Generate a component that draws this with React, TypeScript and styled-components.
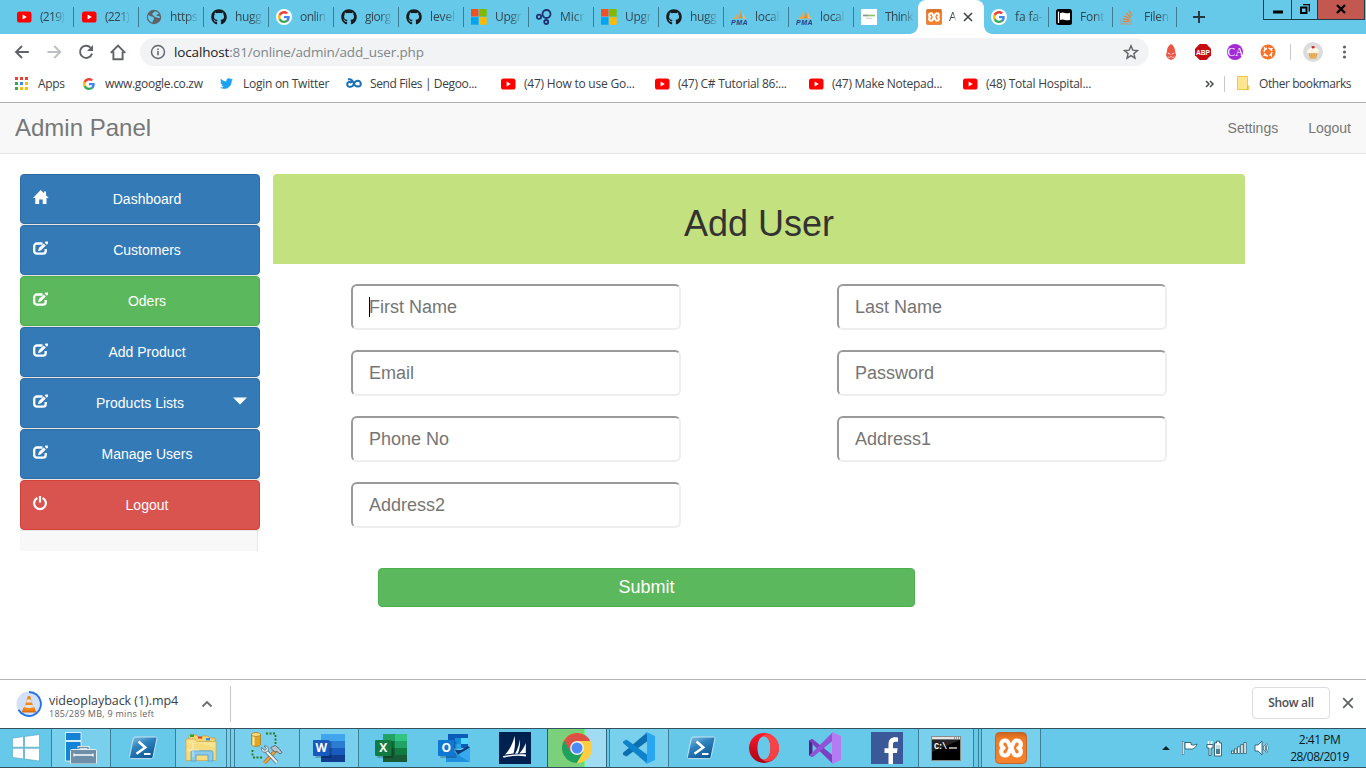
import React from 'react';
import styled, { createGlobalStyle } from 'styled-components';
import { FaGithub, FaTwitter } from 'react-icons/fa';

const SKY = '#66c9ea';
const UI = `'Open Sans', 'Noto Sans', sans-serif`;
const PAGE = `'Liberation Sans', Arial, sans-serif`;

const Global = createGlobalStyle`
  * { box-sizing: border-box; }
  html, body { margin: 0; background: #fff; overflow: hidden; }
  svg { display: block; flex: none; }
`;

const Screen = styled.div`
  width: 1366px;
  height: 768px;
  display: flex;
  flex-direction: column;
  overflow: hidden;
  background: #fff;
  font-family: ${UI};
`;

/* ---------- tab strip ---------- */
const TabStrip = styled.div`
  height: 34px;
  flex: none;
  display: flex;
  padding-left: 9px;
  background: ${SKY};
`;
const TabBox = styled.div<{ $w: number; $line: boolean }>`
  width: ${p => p.$w}px;
  height: 34px;
  flex: none;
  display: flex;
  align-items: center;
  padding-left: 7px;
  gap: 8px;
  background: linear-gradient(#3d7c92, #3d7c92) right 0 top 7px / ${p => (p.$line ? '1px' : '0')} 20px no-repeat;
`;
const TabText = styled.span<{ $ls?: number }>`
  font-size: 12px;
  line-height: 18px;
  color: #33474f;
  white-space: nowrap;
  letter-spacing: ${p => p.$ls ?? -0.4}px;
  mask-image: linear-gradient(to right, #000 60%, rgba(0, 0, 0, 0.15) 100%);
`;
const ActiveTab = styled.div`
  width: 66px;
  height: 34px;
  margin-left: -1px;
  flex: none;
  display: flex;
  align-items: center;
  padding-left: 8px;
  gap: 7px;
  background: #fff;
  border-radius: 8px 8px 0 0;
  position: relative;
  &::before, &::after {
    content: '';
    position: absolute;
    bottom: 0;
    width: 8px;
    height: 8px;
  }
  &::before { left: -8px; background: radial-gradient(circle at 0 0, transparent 7.5px, #fff 8px); }
  &::after { right: -8px; background: radial-gradient(circle at 100% 0, transparent 7.5px, #fff 8px); }
`;
const IconSlot = styled.span`
  width: 16px;
  height: 16px;
  flex: none;
  display: flex;
  align-items: center;
  justify-content: center;
`;
const PlusSlot = styled.div`
  width: 86px;
  display: flex;
  align-items: center;
  padding-left: 15px;
`;
const WindowButtons = styled.div`
  display: flex;
  height: 20px;
  border: 1px solid #1d3c47;
  border-top: 0;
`;
const WinButton = styled.div<{ $w: number; $first?: boolean; $close?: boolean }>`
  width: ${p => p.$w}px;
  background: ${p => (p.$close ? '#c25850' : SKY)};
  border-left: ${p => (p.$first ? 'none' : '1px solid #1d3c47')};
  display: flex;
  align-items: center;
  justify-content: center;
  padding-bottom: 1px;
`;

/* ---------- toolbar ---------- */
const Toolbar = styled.div`
  height: 36px;
  flex: none;
  display: flex;
  align-items: center;
`;
const NavIcons = styled.div`
  width: 140px;
  padding-left: 12px;
  display: flex;
  gap: 12px;
`;
const Omnibox = styled.div`
  width: 1009px;
  height: 28px;
  border-radius: 14px;
  background: #f1f3f4;
  display: flex;
  align-items: center;
  padding: 0 10px;
  gap: 8px;
`;
const Url = styled.span`
  flex: 1;
  font-size: 13.5px;
  line-height: 20px;
  letter-spacing: -0.15px;
  color: #80868b;
  b { font-weight: 400; color: #202124; }
`;
const Extensions = styled.div`
  display: flex;
  align-items: center;
  gap: 16px;
  padding-left: 14px;
`;
const Divider = styled.span<{ $h: number }>`
  width: 1px;
  height: ${p => p.$h}px;
  flex: none;
  background: #c6c9cc;
`;
const ExtEnd = styled.div`
  display: flex;
  align-items: center;
  gap: 12px;
  margin-left: -2px;
`;

/* ---------- bookmarks ---------- */
const BookmarkBar = styled.div`
  height: 33px;
  flex: none;
  display: flex;
  align-items: center;
  padding: 0 0 5px 15px;
  border-bottom: 1px solid #b1b1b1;
`;
const BookmarkItem = styled.div<{ $w: number; $gap: number }>`
  width: ${p => p.$w}px;
  flex: none;
  display: flex;
  align-items: center;
  gap: ${p => p.$gap}px;
`;
const BookmarkText = styled.span<{ $ls: number }>`
  font-size: 12px;
  line-height: 18px;
  color: #3c4043;
  white-space: nowrap;
  letter-spacing: ${p => p.$ls}px;
`;

/* ---------- web page ---------- */
const Page = styled.div`
  height: 576px;
  flex: none;
  font-family: ${PAGE};
`;
const Navbar = styled.div`
  height: 51px;
  display: flex;
  align-items: center;
  padding: 0 15px;
  background: #f8f8f8;
  border-bottom: 1px solid #e7e7e7;
  color: #777;
`;
const Brand = styled.div`
  flex: 1;
  font-size: 24px;
  line-height: 28px;
`;
const NavLink = styled.a`
  margin-left: 30px;
  font-size: 14px;
`;
const Columns = styled.div`
  display: flex;
  align-items: flex-start;
  gap: 15px;
  padding: 20px 0 0 20px;
`;
const Sidebar = styled.div`
  width: 238px;
  height: 377px;
  background: #f8f8f8;
  border-right: 1px solid #e7e7e7;
`;
const tones = {
  blue: ['#337ab7', '#2e6da4'],
  green: ['#5cb85c', '#4cae4c'],
  red: ['#d9534f', '#d43f3a'],
};
const MenuItem = styled.div`
  width: 240px;
  height: 51px;
  border-bottom: 1px solid #e7e7e7;
`;
const MenuButton = styled.div<{ $tone: keyof typeof tones }>`
  width: 240px;
  height: 50px;
  border-radius: 4px;
  border: 1px solid ${p => tones[p.$tone][1]};
  background: ${p => tones[p.$tone][0]};
  color: #fff;
  display: flex;
  align-items: center;
  padding: 0 12px;
  font-size: 14px;
`;
const GlyphSlot = styled.span`
  width: 14px;
  flex: none;
  margin-bottom: 4px;
  svg { overflow: visible; }
`;
const MenuLabel = styled.span`
  flex: 1;
  text-align: center;
`;
const Main = styled.div`
  width: 972px;
`;
const Banner = styled.div`
  height: 90px;
  padding-top: 30px;
  border-radius: 4px 4px 0 0;
  background: #c4e17f;
  text-align: center;
`;
const Title = styled.h1`
  margin: 0;
  font-size: 36px;
  font-weight: 500;
  line-height: 40px;
  color: #333;
`;
const Fields = styled.div`
  display: grid;
  grid-template-columns: 330px 330px;
  column-gap: 156px;
  row-gap: 20px;
  padding: 20px 0 0 78px;
`;
const Field = styled.div`
  position: relative;
  height: 46px;
`;
const Input = styled.input`
  width: 330px;
  height: 46px;
  padding: 8px 16px;
  display: block;
  font-family: ${PAGE};
  font-size: 18px;
  background: #fff;
  border: 2px solid;
  border-color: #9a9a9a #eee #eee #9a9a9a;
  border-radius: 6px;
  outline: none;
  &::placeholder { color: #757575; opacity: 1; }
`;
const Caret = styled.span`
  position: absolute;
  left: 18px;
  top: 13px;
  width: 1px;
  height: 20px;
  background: #000;
`;
const Submit = styled.button`
  display: block;
  width: 537px;
  height: 39px;
  margin: 40px 0 0 105px;
  padding: 0;
  border: 1px solid #4cae4c;
  border-radius: 4px;
  background: #5cb85c;
  color: #fff;
  font-family: ${PAGE};
  font-size: 18px;
`;

/* ---------- download shelf ---------- */
const Shelf = styled.div`
  height: 49px;
  flex: none;
  display: flex;
  align-items: center;
  padding-left: 15px;
  border-top: 1px solid #b5b5b5;
`;
const Download = styled.div`
  width: 151px;
  margin-left: 6px;
  padding-top: 3px;
`;
const FileName = styled.div`
  font-size: 12.5px;
  line-height: 16px;
  letter-spacing: -0.05px;
  color: #3c4043;
  white-space: nowrap;
`;
const Progress = styled.div`
  font-size: 9px;
  line-height: 10px;
  letter-spacing: 0.28px;
  color: #5f6368;
  white-space: nowrap;
`;
const ShelfRight = styled.div`
  margin-left: auto;
  display: flex;
  align-items: center;
  gap: 12px;
  padding: 0 12px 2px 0;
`;
const ShowAll = styled.div`
  width: 78px;
  height: 32px;
  border: 1px solid #dadce0;
  border-radius: 4px;
  font-size: 12px;
  font-weight: 600;
  line-height: 30px;
  letter-spacing: -0.3px;
  text-align: center;
  color: #4b4f53;
`;

/* ---------- taskbar ---------- */
const Taskbar = styled.div`
  height: 40px;
  flex: none;
  display: flex;
  background: ${SKY};
  border-top: 1px solid #34525d;
  border-bottom: 1px solid #34525d;
`;
const Cell = styled.div<{ $w: number; $lit?: boolean; $line?: boolean; $left?: boolean }>`
  width: ${p => p.$w}px;
  flex: none;
  display: flex;
  align-items: center;
  justify-content: center;
  background: ${p => (p.$lit ? '#78d0ec' : 'transparent')};
  border-right: ${p => (p.$line ? '1px solid #3d7f96' : 'none')};
  border-left: ${p => (p.$left ? '1px solid #3d7f96' : 'none')};
`;
const ProgressCell = styled.div`
  width: 60px;
  flex: none;
  display: flex;
  align-items: center;
  justify-content: center;
  background: linear-gradient(to right, #7bd17b 36px, #5cff7a 36px, #5cff7a 37px, #a1dcf2 37px);
  border-left: 1px solid #0c7a28;
  border-right: 1px solid #2f6a80;
`;
const Tray = styled.div`
  margin-left: auto;
  display: flex;
  align-items: center;
`;
const TraySlot = styled.div<{ $w: number }>`
  width: ${p => p.$w}px;
  display: flex;
  justify-content: center;
`;
const Clock = styled.div`
  width: 94px;
  padding-left: 1px;
  font-size: 12px;
  line-height: 17px;
  letter-spacing: -0.5px;
  text-align: center;
  color: #0c1a20;
`;

/* ---------- small icons ---------- */
const YouTube = () => (
  <svg width="16" height="16" viewBox="0 0 16 16">
    <rect x="1" y="2.5" width="14.5" height="11" rx="2.6" fill="#f00" />
    <path d="M6.6 5.6v4.8L10.8 8z" fill="#fff" />
  </svg>
);
const Globe = () => (
  <svg width="16" height="16" viewBox="0 0 16 16">
    <circle cx="8" cy="8" r="7.2" fill="#5f6368" />
    <path d="M2 6.200c1.600 0 2.400 1.200 3.600 1.400 2.200.2 2.400 1.200 2.200 2.600-.3 1.200-1.200 1.200-1.200 3.300C4 13 1.500 10.500 2 6.200zM8.500 2.200c1.800 0 3.600 1 4.400 2.300-.4.900-1.500.7-2.200 1.400-.8.700.6 1.300 1.800 1.200 1 0 1.400.6 1.400 1.400-.2.700-2.500.6-3.600-.2-.9-.6-2-.6-2.400-1.400-.3-.9-1.900-.9-1.700-2 .2-1.200 1.300-.8 1.600-1.500.2-.5.200-.9.700-1.200z" fill={SKY} />
  </svg>
);
const GoogleG = ({ size = 12 }: { size?: number }) => (
  <svg width={size} height={size} viewBox="0 0 48 48">
    <path fill="#4285F4" d="M47 24.500c0-1.700-.1-3-.4-4.500H24v9h13c-.6 3.200-2.300 5.900-5 7.700l7.700 6C44.300 38.500 47 32 47 24.500z" />
    <path fill="#34A853" d="M24 48c6.500 0 11.900-2.100 15.900-5.800l-7.800-6c-2.200 1.500-4.900 2.300-8.100 2.300-6.200 0-11.500-4.200-13.400-9.900l-8 6.200C6.600 42.700 14.700 48 24 48z" />
    <path fill="#FBBC05" d="M10.600 28.600c-.5-1.500-.8-3-.8-4.600s.3-3.100.8-4.600l-8-6.200C.9 16.500 0 20.100 0 24s.9 7.500 2.600 10.800z" />
    <path fill="#EA4335" d="M24 9.500c3.500 0 6.700 1.200 9.200 3.600l6.900-6.900C35.900 2.400 30.500 0 24 0 14.700 0 6.600 5.400 2.600 13.200l8 6.200C12.500 13.700 17.800 9.500 24 9.500z" />
  </svg>
);
const GoogleTab = () => (
  <svg width="16" height="16" viewBox="0 0 16 16">
    <circle cx="8" cy="8" r="8" fill="#fff" />
    <g transform="translate(2 2)"><GoogleG size={12} /></g>
  </svg>
);
const Microsoft = () => (
  <svg width="16" height="16" viewBox="0 0 16 16">
    <path fill="#f25022" d="M0 0h7.500v7.500H0z" /><path fill="#7fba00" d="M8.200 0h7.500v7.500H8.200z" />
    <path fill="#00a4ef" d="M0 8.200h7.500v7.500H0z" /><path fill="#ffb900" d="M8.200 8.200h7.500v7.500H8.200z" />
  </svg>
);
const Circles = () => (
  <svg width="16" height="16" viewBox="0 0 16 16" fill="none" stroke="#1d2f6f" strokeWidth="1.800">
    <circle cx="3" cy="7.800" r="2.100" /><circle cx="10.500" cy="5" r="4" />
    <circle cx="10.200" cy="13" r="2" />
  </svg>
);
const Pma = () => (
  <svg width="17" height="16" viewBox="0 0 17 16">
    <path d="M6.500 1.500C6.600 5 5 8 1.500 10.200c3-.5 4.500-.5 5.500-.2z" fill="#f7a23b" />
    <path d="M9.500.5c.2 4-.5 7-2.300 9.300 1.500-.6 3-.6 4.300 0z" fill="#f28e1c" />
    <path d="M12 3c.8 3 2 5.500 4 7-1.500-.3-3-.2-4-.2z" fill="#f9b35a" />
    <text x="0" y="15.600" fontFamily="Liberation Sans, sans-serif" fontSize="7" fontWeight="700" fontStyle="italic" fill="#2c3f86" textLength="16.500">PMA</text>
  </svg>
);
const Think = () => (
  <svg width="16" height="16" viewBox="0 0 16 16">
    <path fill="#fff" d="M0 0h16v16H0z" />
    <path d="M2 6.500h5" stroke="#8b9488" strokeWidth="1.700" /><path d="M7 6.500h7" stroke="#8cc46e" strokeWidth="1.700" />
    <path d="M5 9.300h6" stroke="#c3cbbf" />
  </svg>
);
const XamppMark = ({ size }: { size: number }) => (
  <svg width={size} height={size} viewBox="0 0 32 32">
    <defs>
      <linearGradient id="xg" x1="0" y1="0" x2="0" y2="1">
        <stop offset="0" stopColor="#c9641f" /><stop offset=".2" stopColor="#f07a24" /><stop offset="1" stopColor="#f5822c" />
      </linearGradient>
    </defs>
    <rect x=".5" y=".5" width="31" height="31" rx="4" fill="url(#xg)" stroke="#c4622a" />
    <path d="M16 16C13 13 14.500 8.500 10.300 8.500 5.500 8.500 5 14 8.500 16 5 18 5.500 23.500 10.300 23.500 14.500 23.500 13.500 19 16 16 18.500 13 17.500 8.500 21.700 8.500 26.500 8.500 27 14 23.500 16 27 18 26.500 23.500 21.700 23.500 17.500 23.500 19 19 16 16z" fill="none" stroke="#fff" strokeWidth="4.200" strokeLinejoin="round" />
  </svg>
);
const FlagTab = () => (
  <svg width="16" height="16" viewBox="0 0 16 16">
    <rect width="16" height="16" rx="2.500" fill="#000" />
    <path d="M2.500 2.500V14" stroke="#fff" strokeWidth="1.300" />
    <path d="M4 4c2-.8 3.600-.6 5 0 1.500.6 3 .4 5-.3v7c-2 .7-3.500.9-5 .3-1.400-.6-3-.8-5 0z" fill="#fff" />
  </svg>
);
const Stack = () => (
  <svg width="16" height="16" viewBox="0 0 16 16" fill="none">
    <path d="M1 9.500v5.500h10V9.500" stroke="#a9a5a0" strokeWidth="1.300" />
    <path d="M3 12.500h6.500M3.200 10l6.300.8M4 7.200l6 1.900M6 4.300l5 3.600M9 1.500l3 5" stroke="#e8843a" strokeWidth="1.400" />
  </svg>
);
const Cross = ({ size, color, w }: { size: number; color: string; w: number }) => (
  <svg width={size} height={size} viewBox="0 0 10 10">
    <path d="M1 1l8 8M9 1L1 9" stroke={color} strokeWidth={w} />
  </svg>
);

const Back = ({ color, flip }: { color: string; flip?: boolean }) => (
  <svg width="20" height="20" viewBox="0 0 20 20" fill="none" stroke={color} strokeWidth="1.900">
    <path d={flip ? 'M3.500 10h12M10.300 4l6 6-6 6' : 'M16.800 10H4.500M10 4l-6 6 6 6'} />
  </svg>
);
const Reload = () => (
  <svg width="20" height="20" viewBox="0 0 20 20">
    <path d="M14.600 5.600A6.100 6.100 0 1 0 16 11.600" fill="none" stroke="#5f6368" strokeWidth="1.900" />
    <path d="M17 3v6h-6z" fill="#5f6368" />
  </svg>
);
const HomeOutline = () => (
  <svg width="20" height="20" viewBox="0 0 20 20" fill="none" stroke="#5f6368" strokeWidth="1.900">
    <path d="M2.800 10.900L10 3.500l7.200 7.400M5.400 9.500v7.700h9.200V9.500" />
  </svg>
);
const Info = () => (
  <svg width="16" height="16" viewBox="0 0 16 16">
    <circle cx="8" cy="8" r="6.500" fill="none" stroke="#5f6368" strokeWidth="1.400" />
    <path d="M8 7v4.300M8 4.400V6" stroke="#5f6368" strokeWidth="1.500" />
  </svg>
);
const Star = () => (
  <svg width="16" height="16" viewBox="0 0 16 16">
    <path d="M8 1.800l1.800 4.300 4.700.4-3.600 3.100 1.100 4.600L8 11.700l-4 2.500 1.100-4.600L1.500 6.500l4.700-.4z" fill="none" stroke="#5f6368" strokeWidth="1.400" />
  </svg>
);
const RedMask = () => (
  <svg width="16" height="16" viewBox="0 0 16 16">
    <path d="M8 0c2.500 1.500 4 4 4 7l1 4c-.5 2.500-2.500 4.500-5 5-2.500-.5-4.500-2.500-5-5l1-4c0-3 1.500-5.500 4-7z" fill="#ea5545" />
    <path d="M4.800 9l2.400 1.200M11.200 9l-2.400 1.200M8 12v1.500M5.200 12.500l1.300 1.500M10.800 12.500L9.500 14" stroke="#fff" strokeWidth=".9" />
  </svg>
);
const Abp = () => (
  <svg width="16" height="16" viewBox="0 0 16 16">
    <path d="M4.700 0h6.600L16 4.700v6.600L11.300 16H4.700L0 11.300V4.700z" fill="#c70d12" />
    <text x="1" y="10.900" fontFamily="Liberation Sans, sans-serif" fontSize="8" fontWeight="700" fill="#fff" textLength="14" lengthAdjust="spacingAndGlyphs">ABP</text>
  </svg>
);
const Ca = () => (
  <svg width="17" height="16" viewBox="0 0 17 16">
    <circle cx="8" cy="8" r="8" fill="#a22bd6" />
    <text x=".5" y="12.200" fontFamily="Liberation Serif, serif" fontSize="12.500" fill="#fff" textLength="16" lengthAdjust="spacingAndGlyphs">CA</text>
  </svg>
);
const OrangeBall = () => (
  <svg width="16" height="16" viewBox="0 0 16 16">
    <circle cx="8" cy="8" r="7.500" fill="#f7722a" />
    <circle cx="8" cy="8" r="3.900" fill="none" stroke="#fff" strokeWidth="1.500" strokeDasharray="4.500 1.630" />
    <path d="M4.200 3.200l.9 2.100M12.800 4.200l-2.100.9M3.200 11.800l2.100-.9M11.800 12.800l-.9-2.100" stroke="#fff" strokeWidth="1.200" />
  </svg>
);
const Cupcake = () => (
  <svg width="20" height="20" viewBox="0 0 20 20">
    <circle cx="10" cy="10" r="10" fill="#dcdcdc" />
    <path d="M5.500 10.500h9l-1.300 6H6.800z" fill="#dd9a3c" />
    <path d="M7.500 11.500l.6 5M10 11.500v5M12.500 11.500l-.6 5" stroke="#f5c979" strokeWidth=".9" />
    <path d="M4 9.500c0-2 1.500-2.500 3-3 1-1.500 4-2 5.500-.5 2 .2 3.500 1.500 3.500 3.300 0 1.500-1.300 2-2.500 2H6.300C5 11.300 4 10.800 4 9.500z" fill="#fdf6e4" />
    <path d="M8.500 5c.5-1.300 2.500-1.500 3.200-.2.300.9-.5 1.700-1.600 1.700S8.400 5.900 8.500 5z" fill="#c9262c" />
  </svg>
);
const Dots = () => (
  <svg width="16" height="16" viewBox="0 0 16 16" fill="#5f6368">
    <circle cx="9.500" cy="3" r="1.600" /><circle cx="9.500" cy="8" r="1.600" /><circle cx="9.500" cy="13" r="1.600" />
  </svg>
);
const appColors = ['#ea4335', '#ea4335', '#ea4335', '#34a853', '#4285f4', '#fbbc05', '#34a853', '#fbbc05', '#fbbc05'];
const AppsGrid = () => (
  <svg width="13" height="13" viewBox="0 0 13 13">
    {appColors.map((c, i) => <rect key={i} x={(i % 3) * 5} y={Math.floor(i / 3) * 5} width="3" height="3" fill={c} />)}
  </svg>
);
const Degoo = () => (
  <svg width="16" height="12" viewBox="0 0 16 12" fill="none" strokeWidth="2">
    <path d="M2 1.500c2.500-.6 4.500.5 6 4.500 1.200 3.200 6.700 3.500 6.800 0 .1-4.300-5.500-4-6.800-.3C6.800 9.700 1.200 10 1.200 6.200c0-2.500 3-3 4.500-1.200" stroke="#1a6fb5" />
  </svg>
);
const Folder = () => (
  <svg width="13" height="15" viewBox="0 0 13 15">
    <path d="M.5.500h10v9.500h1.500v3.500H.5z" fill="#ffe590" stroke="#ecc94a" />
    <path d="M10.500 10v3.500" stroke="#e3bb36" />
  </svg>
);

/* ---------- page glyphs ---------- */
const HomeGlyph = () => (
  <svg width="16" height="14" viewBox="0 0 16 14">
    <path d="M7.700 0L11 3.200V1.500h2v3.700l2.700 2.700H13.500V14H9.700V9.500H6.200V14H2.300V7.900H0z" fill="#fff" />
  </svg>
);
const EditGlyph = () => (
  <svg width="15" height="14" viewBox="0 0 15 14">
    <path d="M9.500 2.500H4A2.700 2.700 0 0 0 1.200 5.200v4.800A2.700 2.700 0 0 0 4 12.700h6a2.700 2.700 0 0 0 2.700-2.700V8" fill="none" stroke="#fff" strokeWidth="2.300" />
    <path d="M5 10.300l.9-3.200 4.800-4.700 2.100 2.100L8 9.300zM11.700 1.400L12.500.6h2.400v2.100l-1.200 1z" fill="#fff" />
  </svg>
);
const PowerGlyph = () => (
  <svg width="14" height="14" viewBox="0 0 14 14" fill="none" stroke="#fff">
    <path d="M4.400 1.900a5.900 5.900 0 1 0 5.200 0" strokeWidth="2.200" /><path d="M7 0v6.500" strokeWidth="2.200" />
  </svg>
);
const CaretGlyph = () => (
  <svg width="14" height="8" viewBox="0 0 14 8"><path d="M0 .5h14L7 7.500z" fill="#fff" /></svg>
);

/* ---------- taskbar icons ---------- */
const Windows = () => (
  <svg width="28" height="28" viewBox="0 0 28 28">
    <path d="M.5 4.200L11.500 2.600v10.600H.5zM12.500 2.500L27.500.500v12.700h-15zM.5 14.300h11v10.600L.5 23.400zM12.500 14.300h15V27l-15-2z" fill="#fff" stroke="#4da3bd" strokeWidth=".6" />
  </svg>
);
const ServerManager = () => (
  <svg width="32" height="32" viewBox="0 0 32 32">
    <path d="M.5.500H16v8H.5zM.5 9.500H16V29H.5z" fill="#1583d3" stroke="#fff" strokeWidth=".8" />
    <path d="M14 16.500v-1h9v1" fill="none" stroke="#fff" strokeWidth="3" />
    <path d="M14 18v-2.500h9V18" fill="none" stroke="#6e8fa8" strokeWidth="1.400" />
    <rect x="5.500" y="17.500" width="26" height="14.500" rx="1" fill="#6e8fa8" stroke="#fff" strokeWidth=".8" />
    <path d="M9 23h19M9 21.500v3M28 21.500v3" stroke="#fff" strokeWidth="1.300" />
  </svg>
);
const PowerShell = () => (
  <svg width="29" height="24" viewBox="0 0 29 24">
    <defs>
      <linearGradient id="ps" x1="0" y1="0" x2=".6" y2="1">
        <stop offset="0" stopColor="#8ec6e8" /><stop offset=".45" stopColor="#2d83bd" /><stop offset="1" stopColor="#0f5a98" />
      </linearGradient>
    </defs>
    <path d="M6.500 1h20c1 0 1.600.7 1.400 1.600l-3.800 18c-.3 1.400-1.100 2-2.300 2h-20c-1 0-1.500-.8-1.300-1.700L4.200 2.800C4.500 1.600 5.300 1 6.500 1z" fill="url(#ps)" stroke="#cfe8f5" strokeWidth=".9" />
    <path d="M9.500 5.500l6.800 6-8.800 6.300" fill="none" stroke="#fff" strokeWidth="2.500" /><path d="M15 18h6.500" stroke="#fff" strokeWidth="2" />
  </svg>
);
const Explorer = () => (
  <svg width="34" height="30" viewBox="0 0 34 30">
    <path d="M5 2h8l2 3h3V3h6l2 2h5v8H5z" fill="#f3d470" stroke="#c79a3b" strokeWidth=".7" />
    <path d="M6 1.500h4v2.500H6z" fill="#2fa836" /><path d="M14 3.500h4v2h-4z" fill="#d9402f" /><path d="M22 5h4v2.500h-4z" fill="#2d8fe0" />
    <path d="M2 6h9l2 2.500h19v19H2z" fill="#f8e390" stroke="#d0a84c" strokeWidth=".8" />
    <path d="M3 12c10-3 20-1 28 3v12H3z" fill="#f3d878" opacity=".7" />
    <path d="M7 28V19.500c0-1 .8-1.700 1.700-1.700h18.600c1 0 1.700.7 1.700 1.700V28h-5v-6H12v6z" fill="#8ccaea" stroke="#4f9dc6" strokeWidth=".8" />
    <path d="M9 10v14M3 17h12" stroke="#fff" strokeWidth=".8" opacity=".7" />
  </svg>
);
const Tools = () => (
  <svg width="32" height="32" viewBox="0 0 32 32">
    <path d="M.5 2.500v10c0 2.500 9 2.500 9 0v-10z" fill="#e0a624" stroke="#a87316" strokeWidth=".7" />
    <path d="M2.500 4v9.500" stroke="#fdeeb0" strokeWidth="2" />
    <ellipse cx="5" cy="2.500" rx="4.500" ry="2" fill="#f9dd7c" stroke="#a87316" strokeWidth=".7" />
    <path d="M15 1.500h10M24.500 3v9M1.500 18v7M2 25.500h9" fill="none" stroke="#2b7a1e" strokeWidth="1.800" strokeDasharray="2 1.500" />
    <path d="M25 18L13.500 31" stroke="#b5701c" strokeWidth="3.600" /><path d="M25 18L13.500 31" stroke="#efa338" strokeWidth="2.200" />
    <path d="M14 18l12 12.500" stroke="#5d6b73" strokeWidth="3.800" /><path d="M14 18l12 12.500" stroke="#eef1f3" strokeWidth="2.200" />
    <path d="M10.500 15.500l3.500 3 1.500-2-2.500-2.500c3-.5 5 1.500 4.500 4.500l-2.500 1.700c-3 .8-5-1.700-4.500-4.700z" fill="#dde3e6" stroke="#5d6b73" strokeWidth=".8" />
    <path d="M20 15.500l4-2 4 3 3 4-2 1.500-3-2.500-2 .5-4-3.500z" fill="#b9c4ca" stroke="#4b5860" strokeWidth=".8" />
  </svg>
);
const OfficeTile = ({ letter, color }: { letter: string; color: string }) => (
  <>
    <path d="M8 7.500h10.500V24H2z" fill="#000" opacity=".22" />
    <rect x="0" y="6" width="16.500" height="16" rx="1" fill={color} />
    <text x="8.200" y="18.300" textAnchor="middle" fontFamily="Open Sans, sans-serif" fontSize="12" fontWeight="700" fill="#fff">{letter}</text>
  </>
);
const Word = () => (
  <svg width="32" height="28" viewBox="0 0 32 28">
    <path fill="#41a5ee" d="M8 0h24v7H8z" /><path fill="#2b7cd3" d="M8 7h24v7H8z" /><path fill="#185abd" d="M8 14h24v7H8z" /><path fill="#103f91" d="M8 21h24v7H8z" />
    <OfficeTile letter="W" color="#185abd" />
  </svg>
);
const Excel = () => (
  <svg width="32" height="28" viewBox="0 0 32 28">
    <path fill="#21a366" d="M8 0h12v7H8z" /><path fill="#33c481" d="M20 0h12v7H20z" /><path fill="#107c41" d="M8 7h12v7H8z" /><path fill="#21a366" d="M20 7h12v7H20z" />
    <path fill="#185c37" d="M8 14h12v7H8zM8 21h24v7H8z" /><path fill="#107c41" d="M20 14h12v7H20z" />
    <OfficeTile letter="X" color="#107c41" />
  </svg>
);
const Outlook = () => (
  <svg width="32" height="28" viewBox="0 0 32 28">
    <path fill="#0a5cb8" d="M10 0h20v14H10z" /><path fill="#1490df" d="M17 4h6v6h-6z" /><path fill="#50d9ff" d="M23 4h7v6h-7z" /><path fill="#28a8ea" d="M17 10h6v5h-6z" />
    <path fill="#0f3f7c" d="M30 12l2 1.500L20 21l-3-5h6z" /><path fill="#35a8ee" d="M32 14v14L20 20.500z" /><path fill="#1f8fe0" d="M8 14l12 6.500L32 28H8z" />
    <OfficeTile letter="O" color="#0f78d4" />
  </svg>
);
const Dynamics = () => (
  <svg width="32" height="32" viewBox="0 0 32 32">
    <path fill="#002050" d="M0 0h32v32H0z" />
    <path fill="#fff" d="M15.500 4c1 6 .5 12-1 17.500L6 22.500C10.500 18 14 11.500 15.500 4zM21 7c.3 5-.3 10-2 14.500l-3 .3C18.500 17.500 20.300 12.500 21 7zM26.800 11v10l-6.500.4c2.700-2.800 5-6.400 6.500-10.400zM4 24c8-1.500 15-2 23-1.600v2C18 22.800 11 24 4.500 25.800z" />
  </svg>
);
const Chrome = () => (
  <svg width="30" height="30" viewBox="0 0 30 30">
    <circle cx="15" cy="15" r="15" fill="#ffcd40" />
    <path d="M15 15L2 7.500A15 15 0 0 0 15 30l7-11z" fill="#1da15f" />
    <path d="M15 8H28.300A15 15 0 0 0 2 7.500l6.700 11z" fill="#dd5044" />
    <path d="M28.300 8H15l6.500 10.500L15 30A15 15 0 0 0 28.300 8z" fill="#ffcd40" />
    <circle cx="15" cy="15" r="6.900" fill="#f1f1f1" /><circle cx="15" cy="15" r="5.500" fill="#4c8bf5" />
  </svg>
);
const VsCode = () => (
  <svg width="32" height="32" viewBox="0 0 32 32">
    <path d="M24 .5v9L3.500 24.500 0 22.800v-2z" fill="#0d6fb0" />
    <path d="M3.500 7.500L24 22.500v9L0 11V9.500z" fill="#0f83cc" />
    <path d="M23.500 0L32 4v24l-8.500 4-1.500-1 2-1.500v-27L22 1z" fill="#2aa7f2" />
  </svg>
);
const Opera = () => (
  <svg width="30" height="30" viewBox="0 0 30 30">
    <defs><linearGradient id="op" x1="0" y1="0" x2="0" y2="1"><stop offset="0" stopColor="#ff1b2d" /><stop offset="1" stopColor="#a70014" /></linearGradient></defs>
    <path d="M15 0a15 15 0 1 0 0 30 15 15 0 1 0 0-30zm0 3.200c4 0 6.500 5.300 6.500 11.800s-2.500 11.800-6.500 11.800S8.500 21.500 8.500 15 11 3.200 15 3.200z" fill="url(#op)" fillRule="evenodd" />
    <path d="M12.500 4C17 -.5 22 1.500 25.500 4.300c6 5.500 6 15.900 0 21.400-4 3.500-9 4-13 .3 5.500 2.300 9-4.500 9-11S18 1.700 12.500 4z" fill="#ff4b4b" opacity=".85" />
  </svg>
);
const VisualStudio = () => (
  <svg width="32" height="32" viewBox="0 0 32 32">
    <path d="M0 8.500L3.500 7v18L0 23.500z" fill="#52218a" />
    <path d="M0 8.500L3.500 7 24 23.500V32L3.800 12.500z" fill="#7b3fc4" />
    <path d="M0 23.500L4 25 24 8.500V0L3.800 20z" fill="#8f55d6" />
    <path d="M23 0l9 4v24l-9 4z" fill="#b57bf0" />
  </svg>
);
const Facebook = () => (
  <svg width="32" height="32" viewBox="0 0 32 32">
    <path fill="#3b5998" d="M0 0h32v32H0z" />
    <path fill="#fff" d="M17.500 32V21h-4v-4.700h4v-4c0-4.500 2.500-7 6.800-7 1 0 2 .1 2.700.2v4.200h-2.500c-2 0-2.500 1.100-2.500 2.600v4h4.600l-.6 4.700h-4v11z" />
  </svg>
);
const Cmd = () => (
  <svg width="30" height="25" viewBox="0 0 30 25">
    <path fill="#000" stroke="#8c8c8c" d="M.5.500h29v24H.5z" /><path fill="#e4e4e4" d="M1 1h28v2.500H1z" />
    <path d="M23 2h1M25 2h1M27 2h1" stroke="#555" />
    <path d="M1 4h28L1 16z" fill="#fff" opacity=".14" />
    <text x="3" y="12.500" fontFamily="Liberation Mono, monospace" fontSize="8.500" fontWeight="700" fill="#fff" textLength="13">C:\</text>
    <path d="M18 12h8" stroke="#fff" strokeWidth="1.200" />
  </svg>
);
const Vlc = () => (
  <svg width="28" height="28" viewBox="0 0 28 28">
    <circle cx="14" cy="14" r="12.500" fill="#d2e0f8" />
    <path d="M14 2a12 12 0 1 1-10.500 17.800" fill="none" stroke="#2673e8" strokeWidth="1.900" />
    <path d="M8.500 17.500h11l1.700 4.500H6.800z" fill="#ee7d14" />
    <path d="M12.800 6h2.400l3.800 13c-2 1.500-8 1.500-10 0z" fill="#f08a1c" />
    <path d="M11.900 9.500h4.200l.9 3h-6zM10.300 15h7.400l.6 2.200c-2 1-6.500 1-8.600 0z" fill="#e6e3df" />
    <path d="M6.800 22h14.400" stroke="#b85a0c" strokeWidth=".8" />
  </svg>
);
const TrayFlag = () => (
  <svg width="16" height="16" viewBox="0 0 16 16">
    <path d="M1 1v14" stroke="#2f5c6c" strokeWidth="2.400" /><path d="M1.200 1.500v13" stroke="#fff" strokeWidth="1.200" />
    <path d="M3 2.500h6v2c2 1 3.500.5 6-.5-1 3-3 5.500-6.500 5H3z" fill="#fff" stroke="#2f5c6c" strokeWidth=".9" />
  </svg>
);
const Battery = () => (
  <svg width="17" height="17" viewBox="0 0 17 17">
    <path d="M2.500 1v3M5.500 1v3" stroke="#fff" strokeWidth="1.600" /><path d="M1 4.500h6v3.500H5v7.500H3V8H1z" fill="#fff" stroke="#2f5c6c" strokeWidth=".9" />
    <path d="M8.500 3H10.500V1.200h3V3h2v13h-7z" fill="#fff" stroke="#2f5c6c" strokeWidth=".9" />
    <path d="M10 5h4v4h-4z" fill="#b9dbe6" /><path d="M10 9h4v5h-4z" fill="#4b7f90" />
  </svg>
);
const Signal = () => (
  <svg width="16" height="12" viewBox="0 0 16 12" fill="#fff" stroke="#2f5c6c" strokeWidth=".8">
    {[0, 1, 2, 3, 4].map(i => <rect key={i} x={0.5 + i * 3.1} y={9 - i * 2.1} width="2.300" height={2.5 + i * 2.1} />)}
  </svg>
);
const Speaker = () => (
  <svg width="16" height="16" viewBox="0 0 16 16">
    <path d="M1 5h3l4-4v14l-4-4H1z" fill="#fff" stroke="#2f5c6c" strokeWidth=".9" />
    <path d="M10 5.500c1 1.500 1 3.500 0 5M12 3.500c2 2.500 2 6.500 0 9" fill="none" stroke="#2f5c6c" strokeWidth="2" />
    <path d="M10 5.500c1 1.500 1 3.500 0 5M12 3.500c2 2.500 2 6.500 0 9" fill="none" stroke="#fff" />
  </svg>
);

/* ---------- data ---------- */
const github = <FaGithub size={16} color="#161b20" />;
const tabs: [React.ReactNode, string, number?][] = [
  [<YouTube />, '(219)', -0.7], [<YouTube />, '(221)', -0.7], [<Globe />, 'https', -0.3], [github, 'hugg', -0.3], [<GoogleTab />, 'onlin', -0.5],
  [github, 'giorg', -0.5], [github, 'level', -0.1], [<Microsoft />, 'Upgr', -0.3], [<Circles />, 'Micr', 0], [<Microsoft />, 'Upgr', -0.3],
  [github, 'hugg', -0.3], [<Pma />, 'local', -0.3], [<Pma />, 'local', -0.3], [<Think />, 'Think', -0.6],
];
const lateTabs: [React.ReactNode, string, number, number][] = [
  [<GoogleTab />, 'fa fa-', 65, -0.1], [<FlagTab />, 'Font', 64, -0.2], [<Stack />, 'Filen', 64, -0.3],
];
const bookmarks: [React.ReactNode, string, number, number, number][] = [
  [<AppsGrid />, 'Apps', 68, 10, -0.3],
  [<GoogleG />, 'www.google.co.zw', 137, 10, -0.3],
  [<FaTwitter size={13} color="#1da1f2" />, 'Login on Twitter', 126, 10, -0.27],
  [<Degoo />, 'Send Files | Degoo...', 154, 8, -0.37],
  [<YouTube />, '(47) How to use Go...', 154, 8, -0.22],
  [<YouTube />, '(47) C# Tutorial 86:...', 154, 8, -0.27],
  [<YouTube />, '(47) Make Notepad...', 154, 8, -0.27],
  [<YouTube />, '(48) Total Hospital...', 243, 8, -0.24],
];
const menu: [string, React.ReactNode, keyof typeof tones, boolean?][] = [
  ['Dashboard', <HomeGlyph />, 'blue'], ['Customers', <EditGlyph />, 'blue'], ['Oders', <EditGlyph />, 'green'],
  ['Add Product', <EditGlyph />, 'blue'], ['Products Lists', <EditGlyph />, 'blue', true],
  ['Manage Users', <EditGlyph />, 'blue'], ['Logout', <PowerGlyph />, 'red'],
];
const fields = ['First Name', 'Last Name', 'Email', 'Password', 'Phone No', 'Address1', 'Address2'];

export default function App() {
  return (
    <Screen>
      <Global />
      <TabStrip>
        {tabs.map(([icon, text, ls], i) => (
          <TabBox key={i} $w={65} $line={i < 13}><IconSlot>{icon}</IconSlot><TabText $ls={ls}>{text}</TabText></TabBox>
        ))}
        <ActiveTab>
          <XamppMark size={16} />
          <TabText>A</TabText>
          <Cross size={10} color="#3c4043" w={1.5} />
        </ActiveTab>
        {lateTabs.map(([icon, text, w, ls]) => (
          <TabBox key={text} $w={w} $line><IconSlot>{icon}</IconSlot><TabText $ls={ls}>{text}</TabText></TabBox>
        ))}
        <PlusSlot>
          <svg width="14" height="14" viewBox="0 0 14 14"><path d="M7 1v12M1 7h12" stroke="#26383f" strokeWidth="1.900" /></svg>
        </PlusSlot>
        <WindowButtons>
          <WinButton $w={27} $first><svg width="10" height="10" viewBox="0 0 10 10"><path d="M0 6.500h10v3H0z" /></svg></WinButton>
          <WinButton $w={26}>
            <svg width="10" height="10" viewBox="0 0 10 10" fill="none" stroke="#000"><path d="M1 3.500h5.500V9H1z" strokeWidth="1.900" /><path d="M3 .7h6.300V7.500" strokeWidth="1.300" /></svg>
          </WinButton>
          <WinButton $w={47} $close><Cross size={10} color="#000" w={2.3} /></WinButton>
        </WindowButtons>
      </TabStrip>

      <Toolbar>
        <NavIcons><Back color="#5f6368" /><Back color="#bdbfc2" flip /><Reload /><HomeOutline /></NavIcons>
        <Omnibox><Info /><Url><b>localhost</b>:81/online/admin/add_user.php</Url><Star /></Omnibox>
        <Extensions>
          <RedMask /><Abp /><Ca /><OrangeBall />
          <ExtEnd><Divider $h={16} /><Cupcake /><Dots /></ExtEnd>
        </Extensions>
      </Toolbar>

      <BookmarkBar>
        {bookmarks.map(([icon, text, w, gap, ls]) => (
          <BookmarkItem key={text} $w={w} $gap={gap}>{icon}<BookmarkText $ls={ls}>{text}</BookmarkText></BookmarkItem>
        ))}
        <BookmarkItem $w={19} $gap={0}>
          <svg width="10" height="8" viewBox="0 0 10 8" fill="none" stroke="#4a4d50" strokeWidth="1.500"><path d="M1 1l3 3-3 3M5 1l3 3-3 3" /></svg>
        </BookmarkItem>
        <BookmarkItem $w={13} $gap={0}><Divider $h={16} /></BookmarkItem>
        <BookmarkItem $w={116} $gap={9}><Folder /><BookmarkText $ls={-0.43}>Other bookmarks</BookmarkText></BookmarkItem>
      </BookmarkBar>

      <Page>
        <Navbar><Brand>Admin Panel</Brand><NavLink>Settings</NavLink><NavLink>Logout</NavLink></Navbar>
        <Columns>
          <Sidebar>
            {menu.map(([label, icon, tone, caret]) => (
              <MenuItem key={label}>
                <MenuButton $tone={tone}>
                  <GlyphSlot>{icon}</GlyphSlot>
                  <MenuLabel>{label}</MenuLabel>
                  {caret && <GlyphSlot><CaretGlyph /></GlyphSlot>}
                </MenuButton>
              </MenuItem>
            ))}
          </Sidebar>
          <Main>
            <Banner><Title>Add User</Title></Banner>
            <Fields>
              {fields.map((f, i) => (
                <Field key={f}><Input placeholder={f} />{i === 0 && <Caret />}</Field>
              ))}
            </Fields>
            <Submit>Submit</Submit>
          </Main>
        </Columns>
      </Page>

      <Shelf>
        <Vlc />
        <Download><FileName>videoplayback (1).mp4</FileName><Progress>185/289 MB, 9 mins left</Progress></Download>
        <svg width="30" height="10" viewBox="0 0 30 10"><path d="M2.500 7.500L7 3l4.500 4.500" fill="none" stroke="#6b6f73" strokeWidth="1.900" /></svg>
        <Divider $h={36} />
        <ShelfRight><ShowAll>Show all</ShowAll><Cross size={12} color="#5f6368" w={1.5} /></ShelfRight>
      </Shelf>

      <Taskbar>
        <Cell $w={52} $line><Windows /></Cell>
        <Cell $w={59} $lit $line><ServerManager /></Cell>
        <Cell $w={65} $line><PowerShell /></Cell>
        <Cell $w={51} $lit $line><Explorer /></Cell>
        <Cell $w={4} $lit $line /><Cell $w={4} $lit $line />
        <Cell $w={65} $lit $line><Tools /></Cell>
        <Cell $w={59} $lit $line><Word /></Cell>
        <Cell $w={64}><Excel /></Cell>
        <Cell $w={61}><Outlook /></Cell>
        <Cell $w={61}><Dynamics /></Cell>
        <Cell $w={2} />
        <ProgressCell><Chrome /></ProgressCell>
        <Cell $w={3} $line />
        <Cell $w={59} $lit $line><VsCode /></Cell>
        <Cell $w={64}><PowerShell /></Cell>
        <Cell $w={61}><Opera /></Cell>
        <Cell $w={62}><VisualStudio /></Cell>
        <Cell $w={62}><Facebook /></Cell>
        <Cell $w={56} $lit $line $left><Cmd /></Cell>
        <Cell $w={5} $line /><Cell $w={3} $line />
        <Cell $w={59} $lit $line><XamppMark size={32} /></Cell>
        <Tray>
          <TraySlot $w={22}><svg width="8" height="4" viewBox="0 0 8 4"><path d="M4 0l4 4H0z" fill="#10242c" /></svg></TraySlot>
          <TraySlot $w={26}><TrayFlag /></TraySlot>
          <TraySlot $w={23}><Battery /></TraySlot>
          <TraySlot $w={25}><Signal /></TraySlot>
          <TraySlot $w={21}><Speaker /></TraySlot>
          <Clock>2:41 PM<br />28/08/2019</Clock>
        </Tray>
      </Taskbar>
    </Screen>
  );
}
